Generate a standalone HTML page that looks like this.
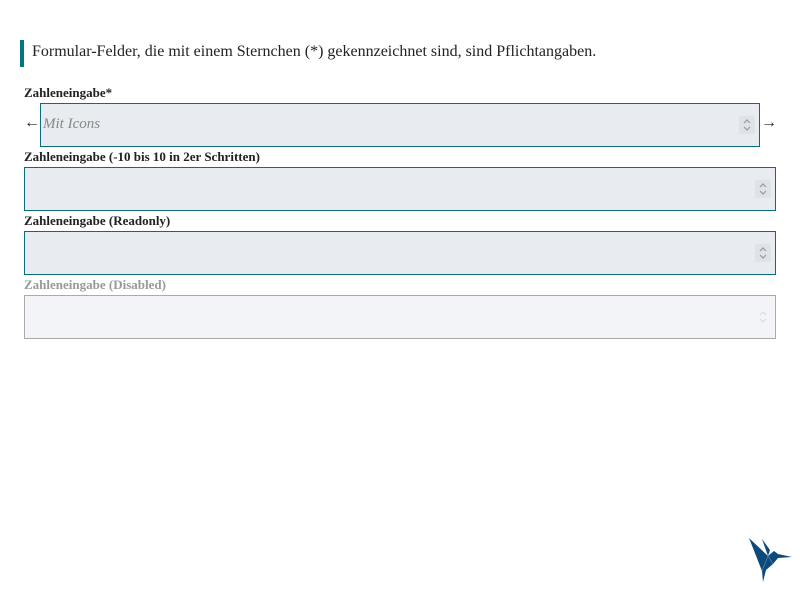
<!DOCTYPE html>
<html><head><meta charset="utf-8"><style>
body{margin:0;width:800px;height:600px;background:#fff;font-family:"Liberation Serif",serif;color:#222;position:relative;overflow:hidden}
.bar{position:absolute;left:20px;top:40px;width:4px;height:27px;background:#00777f}
.note{position:absolute;left:32px;top:43px;font-size:16px}
.lbl{position:absolute;left:24px;font-size:13px;font-weight:bold;color:#222}
.inp{position:absolute;box-sizing:border-box;border:1px solid #0a6e7a;background:#e8ebef;height:44px}
.sp{position:absolute;right:4px;top:12px;width:16px;height:18px;background:#dfe2e7;border-radius:2px}
.sp svg{display:block}
.ph{position:absolute;left:2px;top:12px;font-style:italic;color:#888;font-size:15px}
.arr{position:absolute;font-size:16px;top:114px}
</style></head><body>
<div class="bar"></div>
<div class="note">Formular-Felder, die mit einem Sternchen (*) gekennzeichnet sind, sind Pflichtangaben.</div>
<div class="lbl" style="top:85px">Zahleneingabe*</div>
<div class="arr" style="left:24px">←</div>
<div class="inp" style="left:40px;top:103px;width:720px"><span class="ph">Mit Icons</span><div class="sp"><svg width="16" height="18"><path d="M5 7l3-3 3 3M5 11l3 3 3-3" fill="none" stroke="#999" stroke-width="1.2"/></svg></div></div>
<div class="arr" style="left:761px">→</div>
<div class="lbl" style="top:149px">Zahleneingabe (-10 bis 10 in 2er Schritten)</div>
<div class="inp" style="left:24px;top:167px;width:752px"><div class="sp"><svg width="16" height="18"><path d="M5 7l3-3 3 3M5 11l3 3 3-3" fill="none" stroke="#999" stroke-width="1.2"/></svg></div></div>
<div class="lbl" style="top:213px">Zahleneingabe (Readonly)</div>
<div class="inp" style="left:24px;top:231px;width:752px"><div class="sp"><svg width="16" height="18"><path d="M5 7l3-3 3 3M5 11l3 3 3-3" fill="none" stroke="#999" stroke-width="1.2"/></svg></div></div>
<div class="lbl" style="top:277px;color:#999">Zahleneingabe (Disabled)</div>
<div class="inp" style="left:24px;top:295px;width:752px;border-color:#aaa;background:#f3f4f7"><div class="sp" style="background:none"><svg width="16" height="18"><path d="M5 7l3-3 3 3M5 11l3 3 3-3" fill="none" stroke="#ddd" stroke-width="1.2"/></svg></div></div>
<svg style="position:absolute;left:740px;top:530px" width="60" height="60">
<path d="M9 8L28 26L34 21L38 24L52 27L38 28L33 34L26 40L23 52L22 41Z" fill="#0d4a7c"/>
<path d="M22 9L30 20L28 26Z" fill="#0d4a7c"/>
<path d="M22 41L28 26M28 26L33 34" stroke="#6a8fb0" stroke-width=".6" fill="none"/>
</svg>
</body></html>
